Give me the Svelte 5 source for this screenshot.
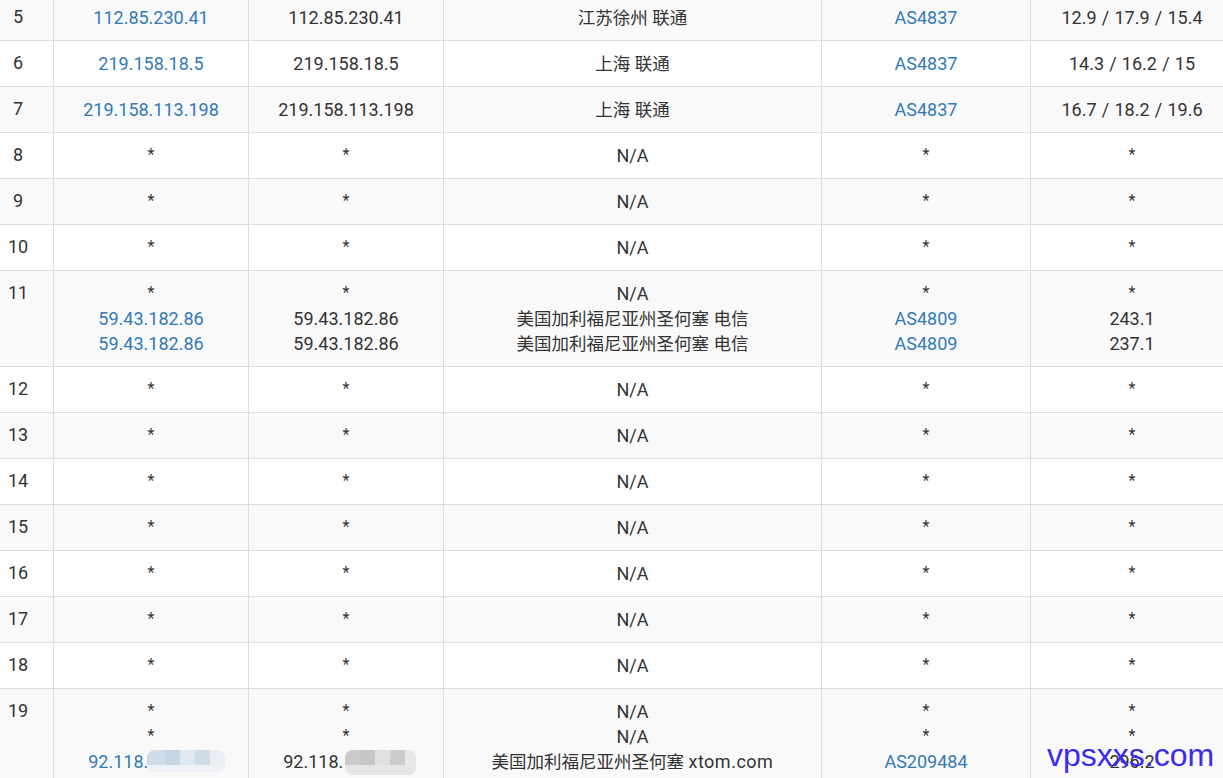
<script>
  const star = { ip: '*', host: '*', geo: 'N/A', asn: '*', rtt: '*' };
  const rows = [
    { n: 5, lines: [{ ip: '112.85.230.41', host: '112.85.230.41', geo: '江苏徐州 联通', asn: 'AS4837', rtt: '12.9 / 17.9 / 15.4' }] },
    { n: 6, lines: [{ ip: '219.158.18.5', host: '219.158.18.5', geo: '上海 联通', asn: 'AS4837', rtt: '14.3 / 16.2 / 15' }] },
    { n: 7, lines: [{ ip: '219.158.113.198', host: '219.158.113.198', geo: '上海 联通', asn: 'AS4837', rtt: '16.7 / 18.2 / 19.6' }] },
    { n: 8, lines: [star] },
    { n: 9, lines: [star] },
    { n: 10, lines: [star] },
    { n: 11, lines: [star,
      { ip: '59.43.182.86', host: '59.43.182.86', geo: '美国加利福尼亚州圣何塞 电信', asn: 'AS4809', rtt: '243.1' },
      { ip: '59.43.182.86', host: '59.43.182.86', geo: '美国加利福尼亚州圣何塞 电信', asn: 'AS4809', rtt: '237.1' }] },
    ...[12, 13, 14, 15, 16, 17, 18].map((n) => ({ n, lines: [star] })),
    { n: 19, lines: [star, star,
      { ip: '92.118.', host: '92.118.', masked: true, geo: '美国加利福尼亚州圣何塞', latin: 'xtom.com', asn: 'AS209484', rtt: '296.2' }] }
  ];
</script>

<div class="page">
  <table>
    <colgroup>
      <col class="c0" /><col class="c1" /><col class="c2" /><col class="c3" /><col class="c4" /><col class="c5" />
    </colgroup>
    <tbody>
      {#each rows as row}
        <tr>
          <td class="num">{row.n}</td>
          <td>{#each row.lines as l}<div class="line">{#if l.ip === '*'}<span class="star">*</span>{:else}<a href="#ip">{l.ip}{#if l.masked}<span class="masked">000.000</span>{/if}</a>{/if}</div>{/each}</td>
          <td>{#each row.lines as l}<div class="line">{#if l.host === '*'}<span class="star">*</span>{:else}{l.host}{#if l.masked}<span class="masked">000.000</span>{/if}{/if}</div>{/each}</td>
          <td class="geo">{#each row.lines as l}<div class="line">{#if l.geo === 'N/A'}<span class="latin">N/A</span>{:else}{l.geo}{#if l.latin}{' '}<span class="latin wide">{l.latin}</span>{/if}{/if}</div>{/each}</td>
          <td>{#each row.lines as l}<div class="line">{#if l.asn === '*'}<span class="star">*</span>{:else}<a href="#as">{l.asn}</a>{/if}</div>{/each}</td>
          <td class="rtt">{#each row.lines as l}<div class="line">{#if l.rtt === '*'}<span class="star">*</span>{:else}{l.rtt}{/if}</div>{/each}</td>
        </tr>
      {/each}
    </tbody>
  </table>
  <div class="blur blue"></div>
  <div class="blur grey"></div>
  <div class="mark">vpsxxs.com</div>
</div>

<style>
  :global(body) { margin: 0; background: #fff; }
  .page {
    position: relative;
    width: 1223px;
    height: 778px;
    overflow: hidden;
    font-family: "Roboto", "Noto Sans CJK SC", sans-serif;
    font-size: 18px;
    line-height: 25px;
    color: #333;
  }
  table {
    width: 1250px;
    table-layout: fixed;
    border-collapse: separate;
    border-spacing: 0;
    margin: -5px 0 0 -17px;
  }
  .c0 { width: 71px; }
  .c1, .c2 { width: 195px; }
  .c3 { width: 378px; }
  .c4 { width: 209px; }
  .c5 { width: 202px; }
  td {
    padding: 10px 0;
    text-align: center;
    vertical-align: top;
    border-right: 1px solid #ddd;
    border-bottom: 1px solid #ddd;
  }
  td:last-child { border-right: 0; }
  tr:nth-child(odd) td { background: #f9f9f9; }
  .line { height: 25px; overflow: visible; }
  td.num { line-height: 24px; padding-bottom: 11px; }
  td.geo { font-size: 17.5px; }
  td.geo .line { line-height: 26px; }
  td.rtt { word-spacing: 0.75px; }
  .latin { font-size: 18px; }
  .wide { letter-spacing: 0.5px; }
  .star {
    font-size: 16px;
    line-height: 1;
    vertical-align: 2px;
  }
  .masked { visibility: hidden; }
  a { color: #337ab7; text-decoration: none; }
  .blur {
    position: absolute;
    top: 750px;
    border-radius: 8px;
    background-repeat: no-repeat;
    background-size: 100% 15px;
  }
  .blue {
    left: 147px;
    width: 78px;
    height: 22px;
    background-color: #eef1f5;
    background-image: linear-gradient(90deg, #d0dce8 0 18px, #c5d5e5 18px 33px, #e2e8ef 33px 48px, #d0dce8 48px 63px, #e9eef3 63px);
  }
  .grey {
    left: 345px;
    width: 71px;
    height: 25px;
    background-color: #e6e6e6;
    background-image: linear-gradient(90deg, #cbc9ca 0 15px, #c5c6c7 15px 30px, #e0e0e0 30px 45px, #cccccc 45px 60px, #e6e7e9 60px);
  }
  .mark {
    position: absolute;
    left: 1047px;
    top: 737px;
    font-family: "Liberation Sans", sans-serif;
    font-size: 32px;
    line-height: 36px;
    color: #3a2bf0;
    white-space: nowrap;
  }
</style>
